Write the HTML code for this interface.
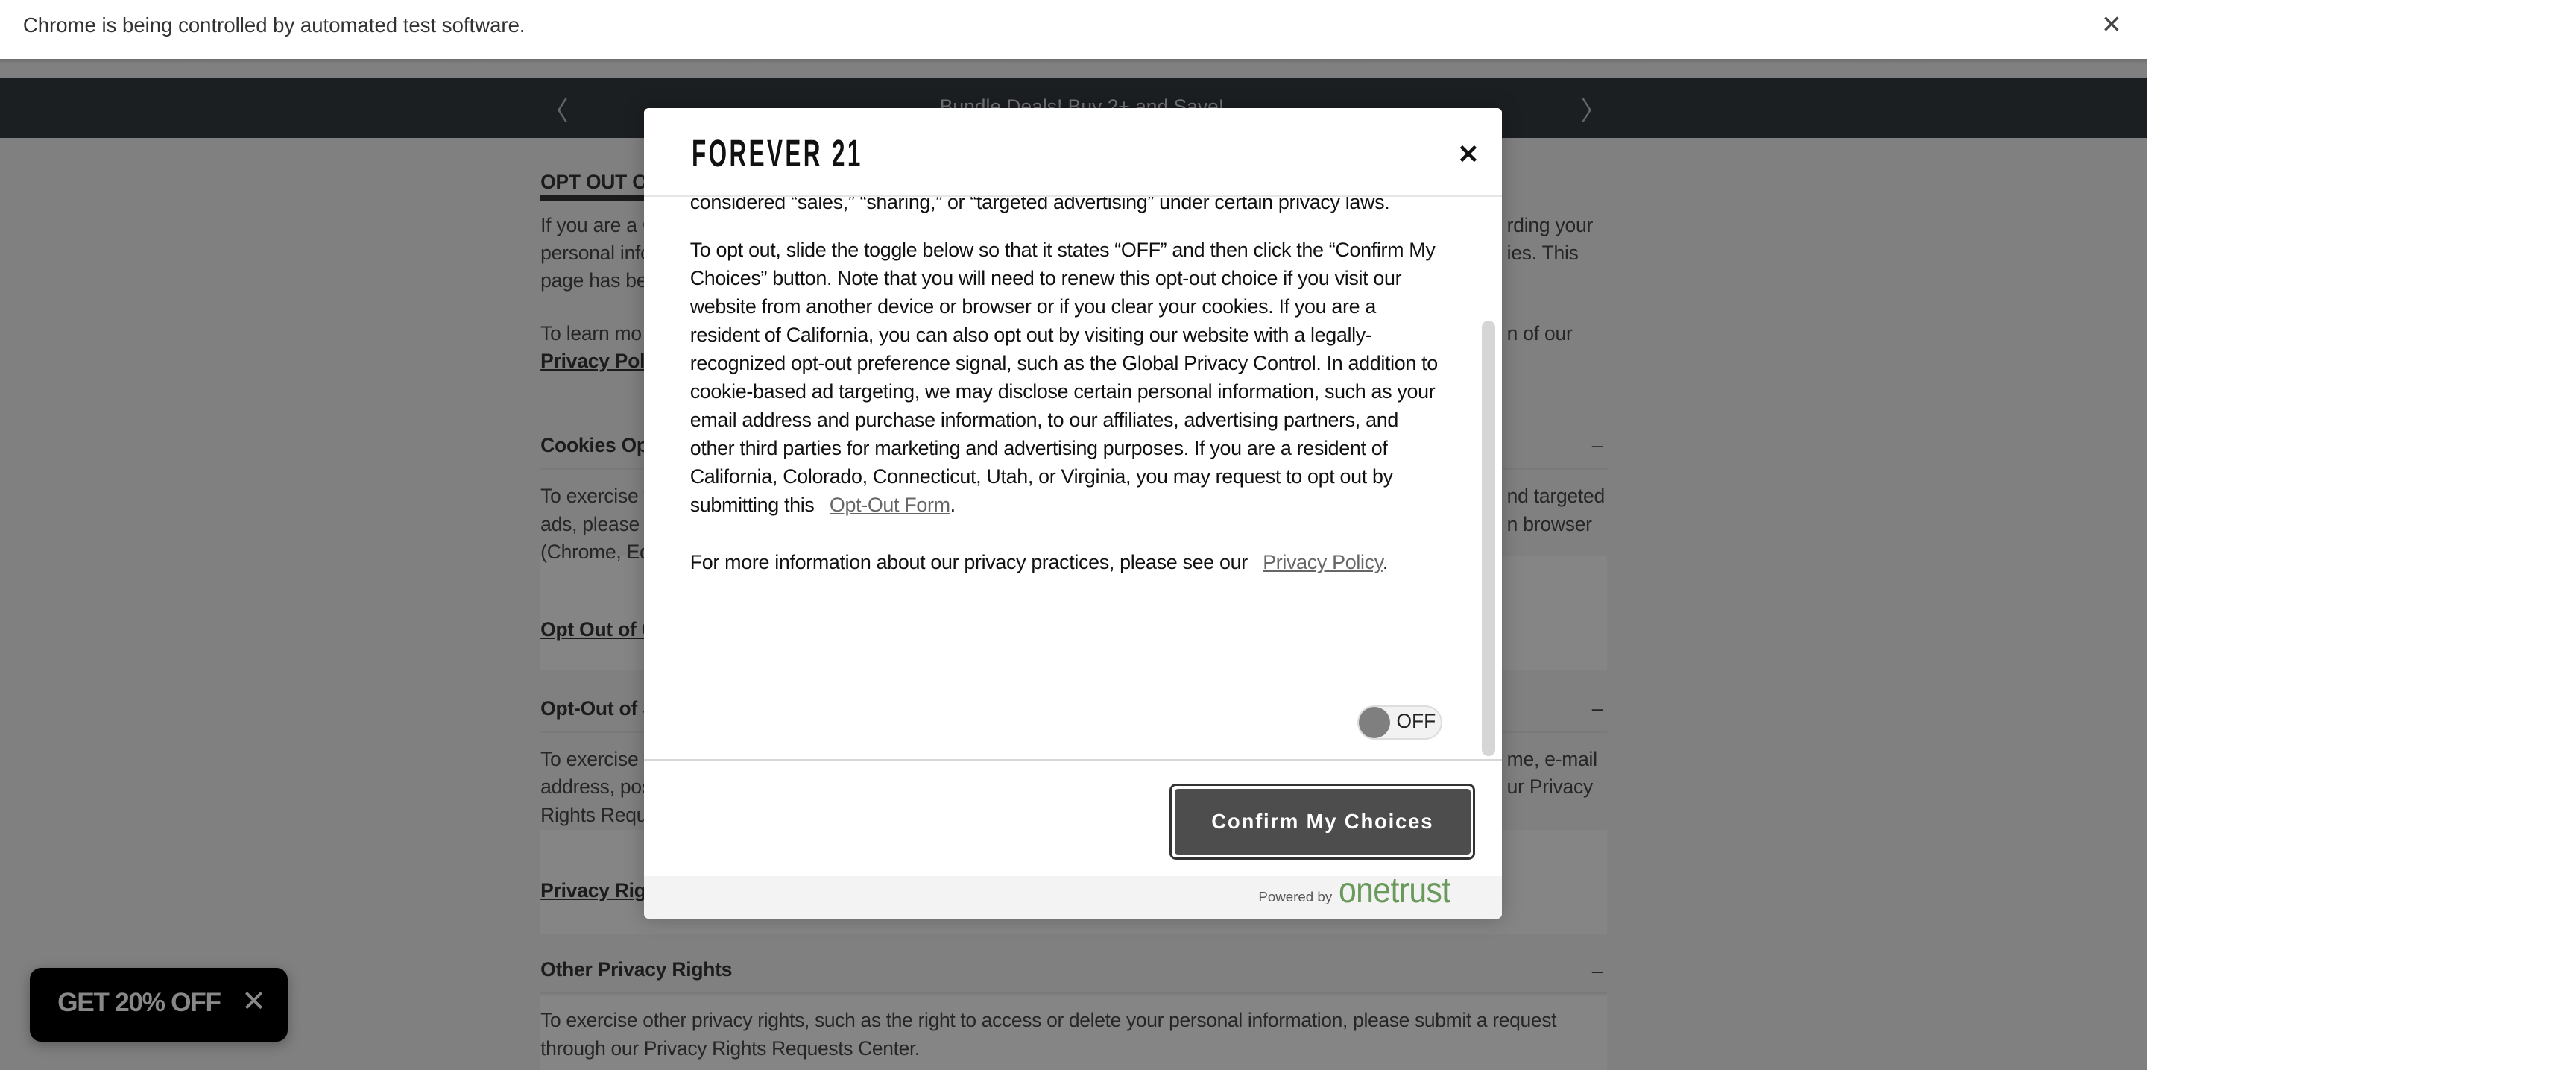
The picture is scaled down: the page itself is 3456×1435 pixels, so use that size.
<!DOCTYPE html>
<html><head><meta charset="utf-8"><style>
*{margin:0;padding:0;box-sizing:border-box}
html,body{width:3456px;height:1435px;overflow:hidden;background:#fff}
#w{zoom:2.2041;position:relative;width:1568px;height:651px;font-family:"Liberation Sans",Arial,sans-serif}
.a{position:absolute;white-space:nowrap}
.bg{color:#262626;font-size:12px;letter-spacing:-.1px}
.b{font-weight:bold;color:#1c1c1c}
.u{text-decoration:underline}
.m{font-size:12.2px;color:#111;line-height:17.2px;letter-spacing:-.15px}
.m a{color:#666;text-decoration:underline;margin-left:6px}
</style></head><body><div id="w">
<div class="a" style="left:0;top:0;width:1568px;height:36px;background:#fff"></div>
<div class="a" style="left:14px;top:8px;font-size:12.5px;color:#333">Chrome is being controlled by automated test software.</div>
<div class="a" style="left:1279px;top:6px;font-size:15px;color:#444">✕</div>
<div class="a" style="left:0;top:36px;width:1307px;height:615px;background:#808080"></div>
<div class="a" style="left:0;top:36px;width:1307px;height:3px;background:linear-gradient(#6e6e6e,#808080)"></div>
<div class="a" style="left:0;top:47px;width:1307px;height:37px;background:#1c1f22"></div>
<div class="a" style="left:572px;top:58px;font-size:12px;color:#777">Bundle Deals! Buy 2+ and Save!</div>
<div class="a" style="left:330px;top:55px;font-size:16px;color:#666">〈</div>
<div class="a" style="left:962px;top:55px;font-size:16px;color:#666">〉</div>
<div class="a" style="left:329px;top:338px;width:649px;height:70px;background:#858585"></div>
<div class="a" style="left:329px;top:505px;width:649px;height:63px;background:#858585"></div>
<div class="a" style="left:329px;top:606px;width:649px;height:45px;background:#858585"></div>
<div class="a bg b" style="left:329px;top:104px">OPT OUT OF</div>
<div class="a" style="left:329px;top:119px;width:70px;height:3px;background:#1c1c1c"></div>
<div class="a bg" style="left:329px;top:130px">If you are a C</div>
<div class="a bg" style="left:329px;top:147px">personal info</div>
<div class="a bg" style="left:329px;top:164px">page has be</div>
<div class="a bg" style="left:329px;top:196px">To learn mo</div>
<div class="a bg b u" style="left:329px;top:213px">Privacy Polic</div>
<div class="a bg" style="left:914px;top:130px">&nbsp;rding your</div>
<div class="a bg" style="left:914px;top:147px">&nbsp;ies. This</div>
<div class="a bg" style="left:914px;top:196px">&nbsp;n of our</div>
<div class="a bg b" style="left:329px;top:264px">Cookies Opt</div>
<div class="a bg" style="left:969px;top:264px">–</div>
<div class="a" style="left:329px;top:285px;width:649px;height:1px;background:#7a7a7a"></div>
<div class="a bg" style="left:329px;top:295px">To exercise y</div>
<div class="a bg" style="left:329px;top:312px">ads, please c</div>
<div class="a bg" style="left:329px;top:329px">(Chrome, Ed</div>
<div class="a bg" style="left:914px;top:295px">&nbsp;nd targeted</div>
<div class="a bg" style="left:914px;top:312px">&nbsp;n browser</div>
<div class="a bg b u" style="left:329px;top:376px">Opt Out of C</div>
<div class="a bg b" style="left:329px;top:424px">Opt-Out of S</div>
<div class="a bg" style="left:969px;top:424px">–</div>
<div class="a" style="left:329px;top:445px;width:649px;height:1px;background:#7a7a7a"></div>
<div class="a bg" style="left:329px;top:455px">To exercise y</div>
<div class="a bg" style="left:329px;top:472px">address, pos</div>
<div class="a bg" style="left:329px;top:489px">Rights Requ</div>
<div class="a bg" style="left:914px;top:455px">&nbsp;me, e-mail</div>
<div class="a bg" style="left:914px;top:472px">&nbsp;ur Privacy</div>
<div class="a bg b u" style="left:329px;top:535px">Privacy Righ</div>
<div class="a bg b" style="left:329px;top:583px">Other Privacy Rights</div>
<div class="a bg" style="left:969px;top:584px">–</div>
<div class="a" style="left:329px;top:604px;width:649px;height:1px;background:#7a7a7a"></div>
<div class="a bg" style="left:329px;top:614px;letter-spacing:-.15px">To exercise other privacy rights, such as the right to access or delete your personal information, please submit a request</div>
<div class="a bg" style="left:329px;top:631px;letter-spacing:-.15px">through our Privacy Rights Requests Center.</div>
<div class="a" style="left:18px;top:589px;width:157px;height:45px;background:#000;border-radius:7px;box-shadow:0 2px 8px rgba(0,0,0,.3)"></div>
<div class="a" style="left:35px;top:601px;font-size:16px;font-weight:bold;color:#888;letter-spacing:-.6px">GET 20% OFF</div>
<div class="a" style="left:147px;top:599px;font-size:18px;color:#888">✕</div>
<!-- modal -->
<div class="a" style="left:392px;top:66px;width:522px;height:493px;background:#fff;border-radius:3px;overflow:hidden;box-shadow:0 0 12px rgba(0,0,0,.25)">
 <div class="a m" style="left:28px;top:49px">considered “sales,” “sharing,” or “targeted advertising” under certain privacy laws.</div>
 <div class="a" style="left:0;top:0;width:522px;height:54px;background:#fff;border-bottom:1px solid #e6e6e6"></div>
 <div class="a" style="left:29px;top:14px;font-size:23px;font-weight:bold;color:#111;letter-spacing:2.5px;transform:scaleX(.62);transform-origin:left">FOREVER 21</div>
 <div class="a" style="left:495px;top:19px;font-size:16px;font-weight:bold;color:#111">✕</div>
 <div class="a m" style="left:28px;top:78px">To opt out, slide the toggle below so that it states “OFF” and then click the “Confirm My<br>Choices” button. Note that you will need to renew this opt-out choice if you visit our<br>website from another device or browser or if you clear your cookies. If you are a<br>resident of California, you can also opt out by visiting our website with a legally-<br>recognized opt-out preference signal, such as the Global Privacy Control. In addition to<br>cookie-based ad targeting, we may disclose certain personal information, such as your<br>email address and purchase information, to our affiliates, advertising partners, and<br>other third parties for marketing and advertising purposes. If you are a resident of<br>California, Colorado, Connecticut, Utah, or Virginia, you may request to opt out by<br>submitting this <a>Opt-Out Form</a><span style="color:#111">.</span></div>
 <div class="a m" style="left:28px;top:268px">For more information about our privacy practices, please see our <a>Privacy Policy</a><span>.</span></div>
 <div class="a" style="left:434px;top:363px;width:52px;height:21px;border:1px solid #ddd;border-radius:11px;background:#f2f2f2"></div>
 <div class="a" style="left:435px;top:364px;width:19px;height:19px;border-radius:50%;background:#7f7f7f"></div>
 <div class="a" style="left:458px;top:366px;font-size:12px;color:#222">OFF</div>
 <div class="a" style="left:510px;top:129px;width:8px;height:265px;border-radius:4px;background:#d6d6d6"></div>
 <div class="a" style="left:0;top:396px;width:522px;height:1px;background:#d8d8d8"></div>
 <div class="a" style="left:320px;top:411px;width:186px;height:46px;border:1.5px solid #333;border-radius:4px"></div>
 <div class="a" style="left:323px;top:414px;width:180px;height:40px;background:#4d4d4d;border-radius:2px;color:#fff;font-weight:bold;font-size:12.5px;letter-spacing:.8px;text-align:center;line-height:40px">Confirm My Choices</div>
 <div class="a" style="left:0;top:467px;width:522px;height:26px;background:#f3f3f3"></div>
 <div class="a" style="left:374px;top:475px;font-size:8.5px;color:#555">Powered by</div>
 <div class="a" style="left:423px;top:463px;font-size:22px;color:#6a9a5b;letter-spacing:-.3px;transform:scaleX(.88);transform-origin:left">onetrust</div>
</div>
</div></body></html>
